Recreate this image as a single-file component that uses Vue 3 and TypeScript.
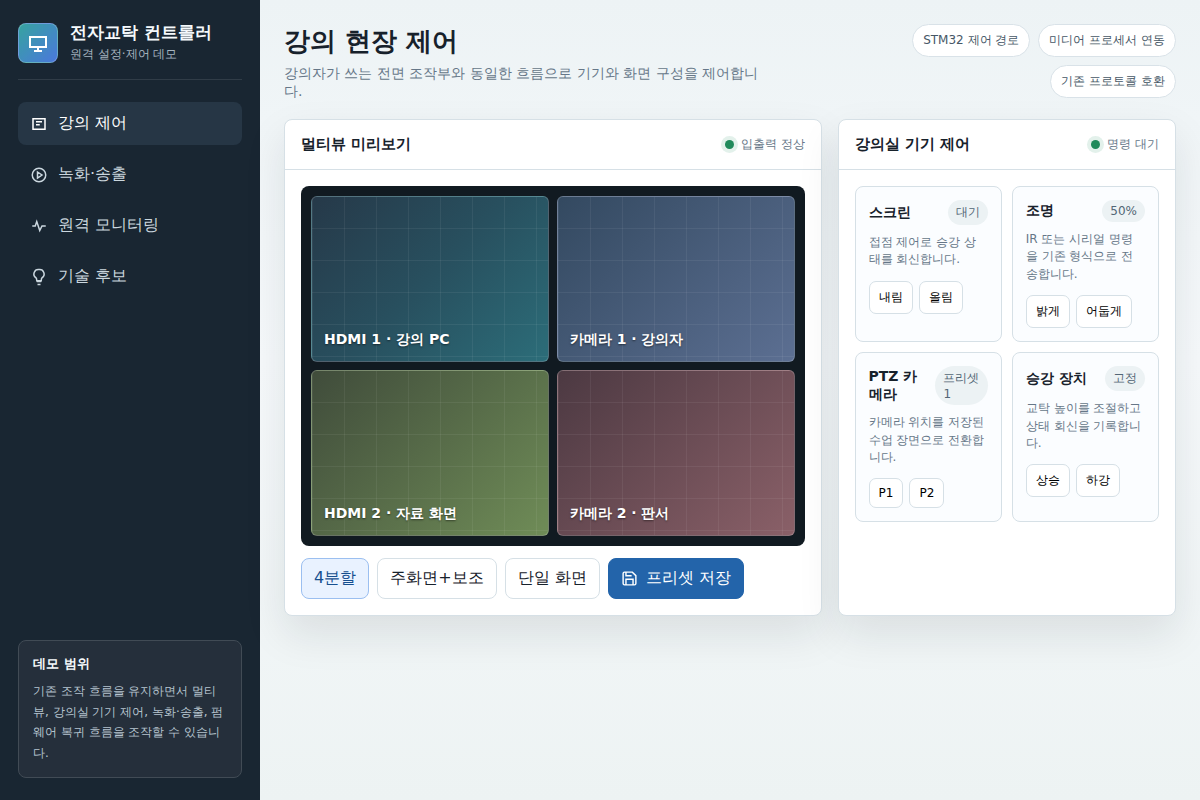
<script setup lang="ts">
import { ref } from 'vue'

interface Device {
  name: string
  state: string
  text: string
  actions: string[]
}

const navItems = [
  { id: 'control', label: '강의 제어' },
  { id: 'record', label: '녹화·송출' },
  { id: 'monitor', label: '원격 모니터링' },
  { id: 'tech', label: '기술 후보' },
]
const activeNav = ref('control')

const tags = ['STM32 제어 경로', '미디어 프로세서 연동', '기존 프로토콜 호환']

const sources = [
  { tone: 'teal', label: 'HDMI 1 · 강의 PC' },
  { tone: 'blue', label: '카메라 1 · 강의자' },
  { tone: 'green', label: 'HDMI 2 · 자료 화면' },
  { tone: 'rose', label: '카메라 2 · 판서' },
]

const layouts = ['4분할', '주화면+보조', '단일 화면']
const activeLayout = ref('4분할')

const devices: Device[] = [
  { name: '스크린', state: '대기', text: '접점 제어로 승강 상태를 회신합니다.', actions: ['내림', '올림'] },
  { name: '조명', state: '50%', text: 'IR 또는 시리얼 명령을 기존 형식으로 전송합니다.', actions: ['밝게', '어둡게'] },
  { name: 'PTZ 카메라', state: '프리셋 1', text: '카메라 위치를 저장된 수업 장면으로 전환합니다.', actions: ['P1', 'P2'] },
  { name: '승강 장치', state: '고정', text: '교탁 높이를 조절하고 상태 회신을 기록합니다.', actions: ['상승', '하강'] },
]
</script>

<template>
  <div class="app">
    <aside class="sidebar">
      <div class="brand">
        <div class="logo">
          <svg viewBox="0 0 24 24" aria-hidden="true"><path d="M4 6h16v10H4zM12 16v4M8 20h8" /></svg>
        </div>
        <div>
          <strong>전자교탁 컨트롤러</strong>
          <span>원격 설정·제어 데모</span>
        </div>
      </div>
      <nav class="nav">
        <button
          v-for="item in navItems"
          :key="item.id"
          type="button"
          :class="{ active: activeNav === item.id }"
          @click="activeNav = item.id"
        >
          <svg viewBox="0 0 24 24" aria-hidden="true">
            <path v-if="item.id === 'control'" d="M4 5h16v14H4zM8 9h8M8 13h5" />
            <path v-else-if="item.id === 'record'" d="M12 3a9 9 0 1 0 0 18a9 9 0 0 0 0-18zM10 8l6 4l-6 4z" />
            <path v-else-if="item.id === 'monitor'" d="M3 12h4l2-6l4 12l3-6h5" />
            <path v-else d="M9 18h6M10 22h4M12 2a6 6 0 0 0-4 11c1 1 1 3 1 4h6c0-1 0-3 1-4A6 6 0 0 0 12 2z" />
          </svg>
          <span>{{ item.label }}</span>
        </button>
      </nav>
      <div class="scope">
        <strong>데모 범위</strong>
        <p>기존 조작 흐름을 유지하면서 멀티뷰, 강의실 기기 제어, 녹화·송출, 펌웨어 복귀 흐름을 조작할 수 있습니다.</p>
      </div>
    </aside>

    <main class="main">
      <header class="top">
        <div>
          <h1>강의 현장 제어</h1>
          <p>강의자가 쓰는 전면 조작부와 동일한 흐름으로 기기와 화면 구성을 제어합니다.</p>
        </div>
        <div class="tags">
          <span v-for="tag in tags" :key="tag">{{ tag }}</span>
        </div>
      </header>

      <div class="panels">
        <section class="panel">
          <div class="panel-head">
            <h2>멀티뷰 미리보기</h2>
            <span class="status">입출력 정상</span>
          </div>
          <div class="panel-body">
            <div class="stage">
              <div v-for="source in sources" :key="source.label" class="tile" :class="source.tone">
                <span>{{ source.label }}</span>
              </div>
            </div>
            <div class="layouts">
              <button
                v-for="layout in layouts"
                :key="layout"
                type="button"
                :class="{ active: activeLayout === layout }"
                @click="activeLayout = layout"
              >
                {{ layout }}
              </button>
              <button type="button" class="primary">
                <svg viewBox="0 0 24 24" aria-hidden="true">
                  <path d="M19 21H5a2 2 0 0 1-2-2V5a2 2 0 0 1 2-2h11l5 5v11a2 2 0 0 1-2 2zM17 21v-8H7v8M7 3v5h8" />
                </svg>
                <span>프리셋 저장</span>
              </button>
            </div>
          </div>
        </section>

        <section class="panel">
          <div class="panel-head">
            <h2>강의실 기기 제어</h2>
            <span class="status">명령 대기</span>
          </div>
          <div class="panel-body devices">
            <article v-for="device in devices" :key="device.name" class="device">
              <div class="device-head">
                <strong>{{ device.name }}</strong>
                <span>{{ device.state }}</span>
              </div>
              <p>{{ device.text }}</p>
              <div class="actions">
                <button v-for="action in device.actions" :key="action" type="button">{{ action }}</button>
              </div>
            </article>
          </div>
        </section>
      </div>
    </main>
  </div>
</template>

<style>
body {
  margin: 0;
}
</style>

<style scoped>
.app,
.app * {
  box-sizing: border-box;
}
.app {
  display: grid;
  grid-template-columns: 260px minmax(0, 1fr);
  min-height: 100vh;
  color: #17212b;
  background: #eef3f5;
  font-family: "DejaVu Sans", sans-serif;
}
h1,
h2,
p {
  margin: 0;
}
button {
  font: inherit;
  cursor: pointer;
}
svg {
  fill: none;
  stroke: currentColor;
  stroke-width: 2;
}
.sidebar {
  display: flex;
  flex-direction: column;
  padding: 22px 18px;
  background: #192632;
  color: #f5f9fc;
}
.brand {
  display: flex;
  align-items: center;
  gap: 12px;
  padding-bottom: 16px;
  border-bottom: 1px solid #303c47;
}
.logo {
  display: grid;
  place-items: center;
  width: 40px;
  height: 40px;
  border: 1px solid rgba(255, 255, 255, 0.22);
  border-radius: 8px;
  background: linear-gradient(135deg, #36a3a0, #4b78dc);
  color: #fff;
}
.logo svg {
  width: 24px;
  height: 24px;
}
.brand strong,
.brand span {
  display: block;
}
.brand strong {
  font-size: 17px;
  line-height: 20px;
}
.brand span {
  margin-top: 4px;
  color: #a6b4c0;
  font-size: 12px;
}
.nav {
  display: grid;
  gap: 8px;
  margin-top: 22px;
}
.nav button {
  display: flex;
  align-items: center;
  gap: 10px;
  padding: 11px 12px;
  border: 0;
  border-radius: 8px;
  background: transparent;
  color: #cbd7df;
  font-size: 16px;
  text-align: left;
}
.nav button.active {
  background: #263645;
  color: #fff;
}
.nav svg {
  width: 18px;
  height: 18px;
}
.scope {
  margin-top: auto;
  padding: 14px;
  border: 1px solid #414b55;
  border-radius: 8px;
  background: #252f3b;
}
.scope strong {
  display: block;
  margin-bottom: 8px;
  font-size: 13px;
}
.scope p {
  color: #b6c4cf;
  font-size: 12px;
  line-height: 1.7;
}
.main {
  padding: 24px;
  background: linear-gradient(180deg, #edf3f5 0%, #f6f9fb 45%, #edf3f3 100%);
}
.top {
  display: flex;
  justify-content: space-between;
  align-items: flex-start;
  gap: 18px;
  margin-bottom: 18px;
}
.top h1 {
  font-size: 26px;
}
.top p {
  margin-top: 6px;
  color: #667788;
  font-size: 14px;
}
.tags {
  display: flex;
  flex-wrap: wrap;
  justify-content: flex-end;
  gap: 8px;
}
.tags span {
  padding: 7px 10px;
  border: 1px solid #d9e2e8;
  border-radius: 999px;
  background: #fff;
  color: #465766;
  font-size: 12px;
}
.panels {
  display: grid;
  grid-template-columns: minmax(0, 1.35fr) minmax(0, 0.85fr);
  gap: 16px;
}
.panel {
  border: 1px solid #d6e0e6;
  border-radius: 8px;
  background: #fff;
  box-shadow: 0 18px 42px rgba(23, 33, 43, 0.1);
}
.panel-head {
  display: flex;
  justify-content: space-between;
  align-items: center;
  padding: 15px 16px;
  border-bottom: 1px solid #d6e0e6;
}
.panel-head h2 {
  font-size: 15px;
}
.status {
  display: flex;
  align-items: center;
  gap: 7px;
  color: #667788;
  font-size: 12px;
}
.status::before {
  content: "";
  width: 9px;
  height: 9px;
  border-radius: 50%;
  background: #218a5b;
  box-shadow: 0 0 0 4px #e3f1eb;
}
.panel-body {
  padding: 16px;
}
.stage {
  display: grid;
  grid-template-columns: 1fr 1fr;
  grid-auto-rows: 1fr;
  gap: 8px;
  min-height: 360px;
  padding: 10px;
  border-radius: 8px;
  background: #111a21;
}
.tile {
  position: relative;
  display: flex;
  align-items: flex-end;
  padding: 12px;
  overflow: hidden;
  border: 1px solid rgba(255, 255, 255, 0.2);
  border-radius: 6px;
  color: #fff;
  font-size: 14px;
  font-weight: 700;
  text-shadow: 0 1px 2px rgba(0, 0, 0, 0.5);
}
.tile::before {
  content: "";
  position: absolute;
  inset: 0;
  background:
    linear-gradient(90deg, rgba(255, 255, 255, 0.06) 1px, transparent 1px),
    linear-gradient(0deg, rgba(255, 255, 255, 0.06) 1px, transparent 1px);
  background-size: 32px 32px;
}
.tile span {
  position: relative;
}
.teal {
  background: linear-gradient(135deg, #263949, #28505f 50%, #2c6d79);
}
.blue {
  background: linear-gradient(135deg, #334960, #5c6f92);
}
.green {
  background: linear-gradient(135deg, #404c3b, #6f8c57);
}
.rose {
  background: linear-gradient(135deg, #4c3942, #8a6068);
}
.layouts {
  display: flex;
  flex-wrap: wrap;
  gap: 8px;
  margin-top: 12px;
}
.layouts button {
  display: inline-flex;
  align-items: center;
  gap: 8px;
  padding: 9px 12px;
  border: 1px solid #d6e0e6;
  border-radius: 8px;
  background: #fff;
  color: #17212b;
  font-size: 16px;
}
.layouts button.active {
  border-color: #9bbff0;
  background: #e9f2ff;
  color: #174f8f;
}
.layouts button.primary {
  border-color: #2364aa;
  background: #2364aa;
  color: #fff;
}
.layouts svg {
  width: 17px;
  height: 17px;
}
.devices {
  display: grid;
  grid-template-columns: 1fr 1fr;
  align-content: start;
  gap: 10px;
}
.device {
  padding: 13px;
  border: 1px solid #d6e0e6;
  border-radius: 8px;
  background: #fbfdff;
}
.device-head {
  display: flex;
  justify-content: space-between;
  align-items: center;
  gap: 8px;
}
.device-head strong {
  font-size: 14px;
}
.device-head span {
  padding: 4px 8px;
  border-radius: 999px;
  background: #ecf2f4;
  color: #526675;
  font-size: 12px;
}
.device p {
  margin-top: 9px;
  color: #667788;
  font-size: 12px;
  line-height: 1.45;
}
.actions {
  display: flex;
  flex-wrap: wrap;
  align-items: center;
  gap: 6px;
  margin-top: 12px;
}
.actions button {
  padding: 7px 9px;
  border: 1px solid #d6e0e6;
  border-radius: 7px;
  background: #fff;
  color: #000;
  font-size: 12px;
}
</style>
